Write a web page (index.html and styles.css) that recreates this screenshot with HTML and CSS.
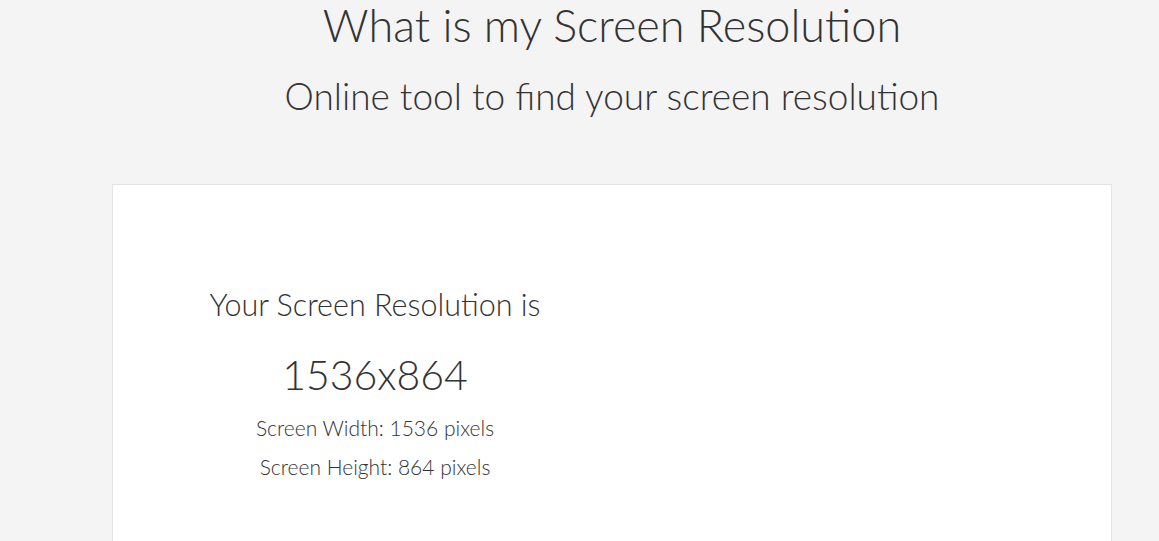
FILE: index.html
```html
<!DOCTYPE html>
<html lang="en">
<head>
    <meta charset="UTF-8">
    <meta name="viewport" content="width=device-width, initial-scale=1.0">
    <title>What is my Screen Resolution</title>
    <link rel="stylesheet" href="styles.css">
</head>
<body>

    <div class="page">
        <div class="header">
            <h1>What is my Screen Resolution</h1>
            <h2>Online tool to find your screen resolution</h2>
        </div>

        <div class="card">
            <div class="result">
                <h3>Your Screen Resolution is</h3>
                <p class="resolution" id="resolution">1536x864</p>
                <p class="detail">Screen Width: <span id="width">1536</span> pixels</p>
                <p class="detail">Screen Height: <span id="height">864</span> pixels</p>
            </div>
            <div class="side"></div>
        </div>
    </div>

</body>
</html>
```

FILE: styles.css
```css
body {
    font-family: Lato, "Open Sans", sans-serif;
    font-weight: 300;
    margin: 0;
    background-color: #f4f4f4;
    color: #333;
}
.page {
    width: 1000px;
    margin-left: 112px;
}
.header {
    text-align: center;
}
.header h1 {
    margin: 0;
    padding-top: 2px;
    font-size: 45px;
    font-weight: 300;
    line-height: 46px;
}
.header h2 {
    margin: 26px 0 0 0;
    font-size: 37px;
    font-weight: 300;
    line-height: 44px;
}
.card {
    display: flex;
    margin-top: 66px;
    padding: 80px 25px 60px 25px;
    background: white;
    border: 1px solid #e3e3e3;
    min-height: 300px;
}
.result {
    flex: 1;
    text-align: center;
}
.side {
    flex: 1;
}
.result h3 {
    margin: 19px 0 0 0;
    font-size: 30.5px;
    font-weight: 300;
    line-height: 40px;
}
.resolution {
    margin: 27px 0 0 0;
    font-size: 41px;
    line-height: 48px;
}
.detail {
    margin: 13px 0 0 0;
    font-size: 21px;
    line-height: 32px;
}
.detail + .detail {
    margin-top: 7px;
}
```
